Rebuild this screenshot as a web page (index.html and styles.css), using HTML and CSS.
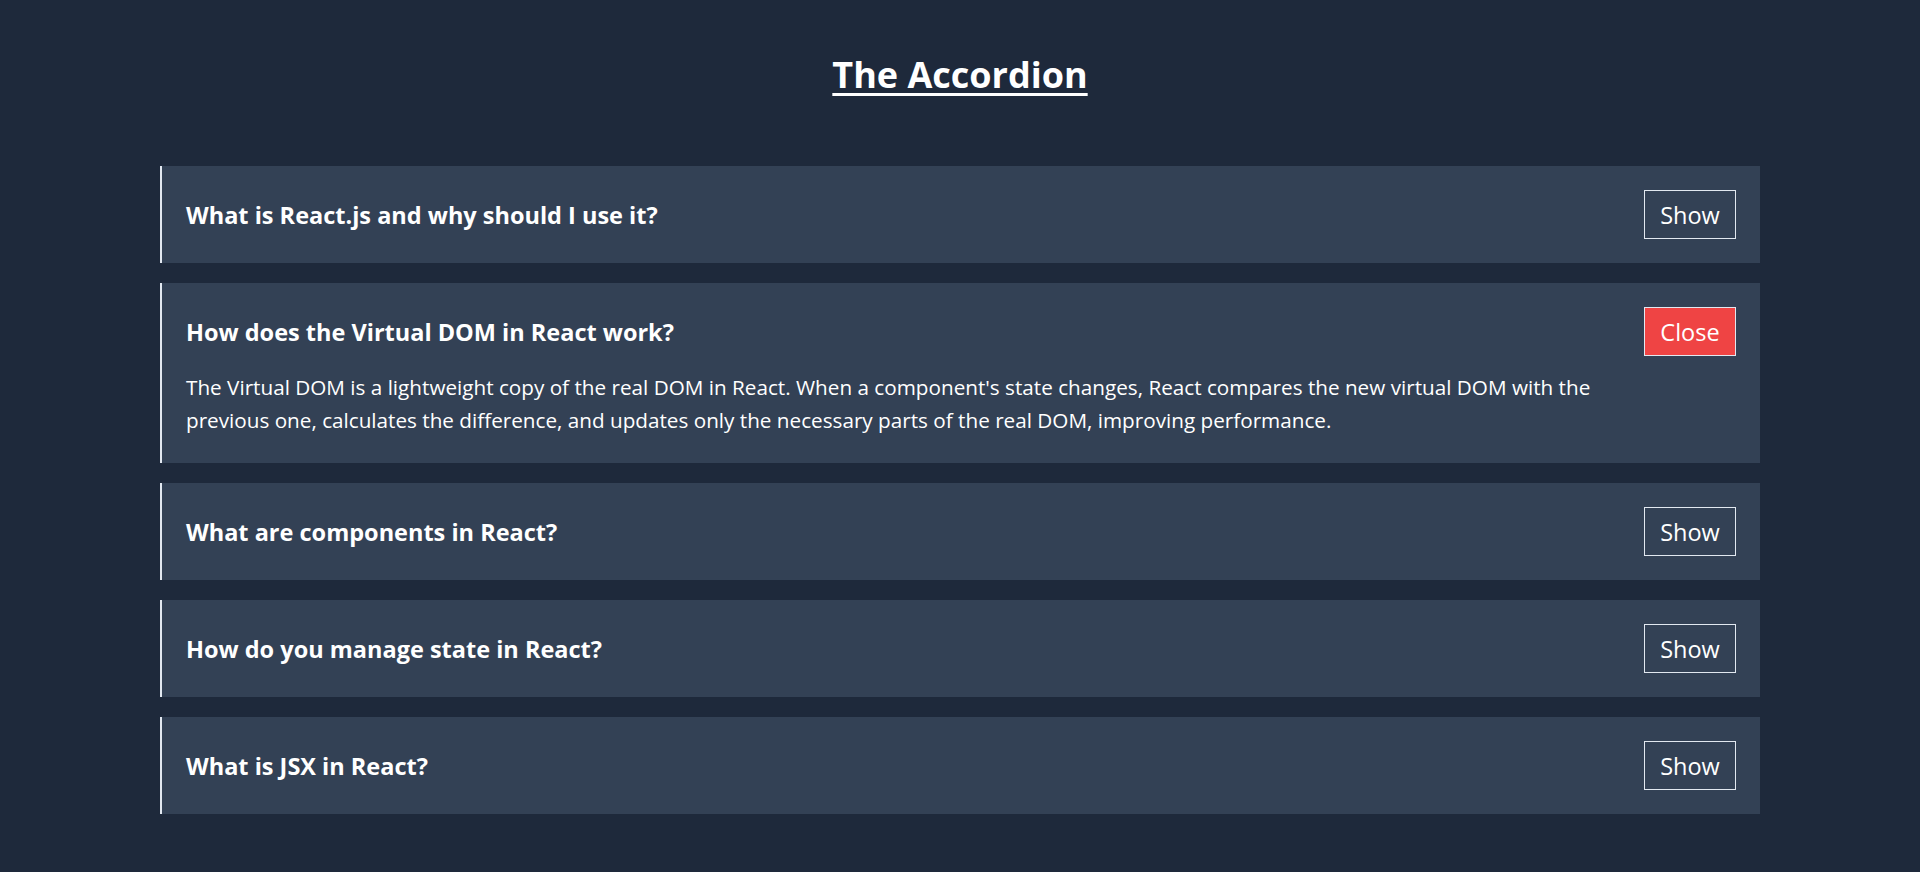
FILE: index.html
```html
<!DOCTYPE html>
<html lang="en">
<head>
<meta charset="utf-8">
<title>The Accordion</title>
<link rel="stylesheet" href="styles.css">
</head>
<body>
<main class="page">
  <h1 class="title">The Accordion</h1>
  <section class="accordion">
    <div class="item">
      <div class="item-head">
        <h3 class="question">What is React.js and why should I use it?</h3>
        <button class="toggle">Show</button>
      </div>
    </div>
    <div class="item">
      <div class="item-head">
        <h3 class="question">How does the Virtual DOM in React work?</h3>
        <button class="toggle toggle-close">Close</button>
      </div>
      <p class="answer">The Virtual DOM is a lightweight copy of the real DOM in React. When a component's state changes, React compares the new virtual DOM with the previous one, calculates the difference, and updates only the necessary parts of the real DOM, improving performance.</p>
    </div>
    <div class="item">
      <div class="item-head">
        <h3 class="question">What are components in React?</h3>
        <button class="toggle">Show</button>
      </div>
    </div>
    <div class="item">
      <div class="item-head">
        <h3 class="question">How do you manage state in React?</h3>
        <button class="toggle">Show</button>
      </div>
    </div>
    <div class="item">
      <div class="item-head">
        <h3 class="question">What is JSX in React?</h3>
        <button class="toggle">Show</button>
      </div>
    </div>
  </section>
</main>
</body>
</html>
```

FILE: styles.css
```css
* { box-sizing: border-box; }
html, body {
  margin: 0;
  padding: 0;
  background: #1e293b;
  color: #ffffff;
  font-family: "Open Sans", "Noto Sans", sans-serif;
}
.page {
  padding: 50px 160px 40px;
}
.title {
  margin: 0 0 66px;
  text-align: center;
  font-size: 36px;
  line-height: 50px;
  font-weight: 700;
  text-decoration: underline;
  text-decoration-thickness: 3px;
  text-underline-offset: 5px;
}
.accordion {
  display: flex;
  flex-direction: column;
  gap: 20px;
}
.item {
  background: #334155;
  border-left: 2px solid #e2e8f0;
  padding: 24px;
}
.item-head {
  display: flex;
  align-items: center;
  justify-content: space-between;
  gap: 16px;
}
.question {
  margin: 0;
  font-size: 23.5px;
  font-weight: 700;
  line-height: 32px;
}
.toggle {
  width: 92px;
  height: 49px;
  padding: 0;
  background: transparent;
  color: #ffffff;
  border: 1px solid #e2e8f0;
  font-family: inherit;
  font-size: 23.5px;
  text-align: center;
  cursor: pointer;
}
.toggle-close {
  background: #ef4444;
}
.answer {
  margin: 15px 0 2px;
  padding-right: 70px;
  font-size: 20.7px;
  line-height: 33px;
}
```
